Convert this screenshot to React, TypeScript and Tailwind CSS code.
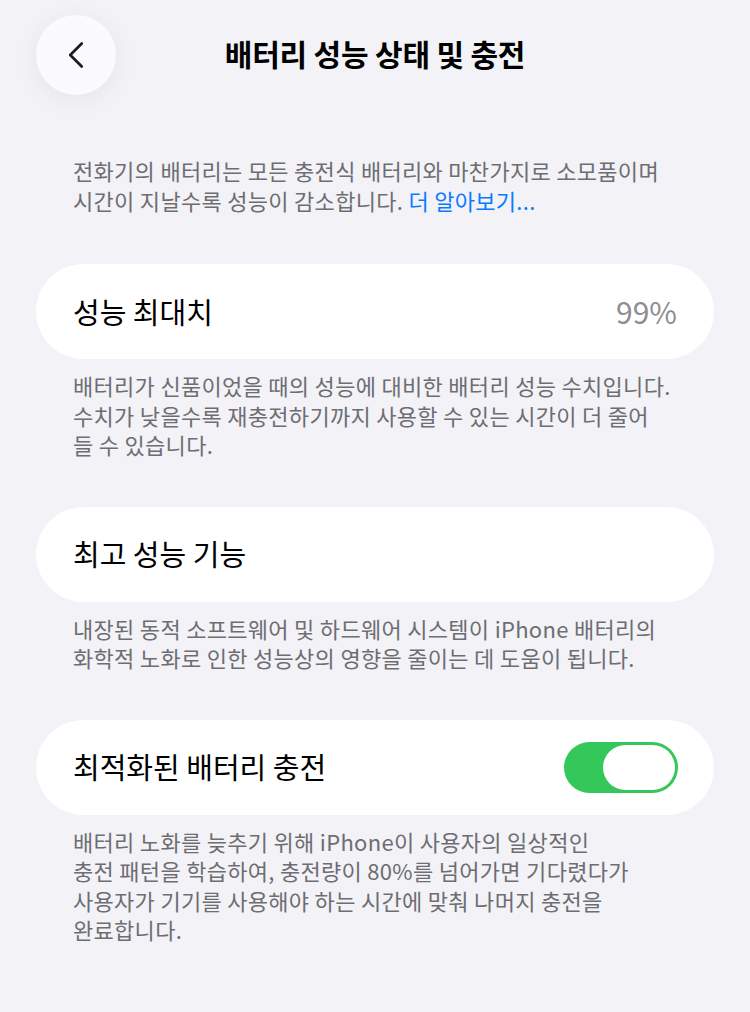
import { ChevronLeft } from 'lucide-react'

const font = { fontFamily: '"Noto Sans CJK KR", "Noto Sans", sans-serif' }

function Footer({ children }: { children: React.ReactNode }) {
  return (
    <p className="px-[73px] pt-[12px] text-[22px] leading-[29.5px] tracking-[0.3px] text-[#6d6d72]">
      {children}
    </p>
  )
}

function Toggle({ on }: { on: boolean }) {
  return (
    <div
      className={`flex h-[51px] w-[114px] items-center rounded-full p-[3px] ${
        on ? 'justify-end bg-[#34c759]' : 'justify-start bg-[#e9e9ea]'
      }`}
    >
      <div className="h-[45px] w-[72px] rounded-full bg-white" />
    </div>
  )
}

export default function App() {
  return (
    <div className="min-h-[1012px] w-[750px] bg-[#f2f2f7] text-black" style={font}>
      {/* Header */}
      <div className="relative flex h-[110px] items-center justify-center">
        <button className="absolute left-[36px] top-[15px] flex h-[80px] w-[80px] items-center justify-center rounded-full bg-[#fbfbfd] shadow-[0_4px_24px_rgba(0,0,0,0.06)]">
          <ChevronLeft className="h-[46px] w-[46px] text-[#1c1c1e]" strokeWidth={1.4} />
        </button>
        <h1 className="-mt-[4px] text-[30px] font-bold tracking-[-0.2px]">배터리 성능 상태 및 충전</h1>
      </div>

      <p className="px-[73px] pt-[45px] text-[22px] leading-[30px] tracking-[0.3px] text-[#6d6d72]">
        전화기의 배터리는 모든 충전식 배터리와 마찬가지로 소모품이며
        <br />
        시간이 지날수록 성능이 감소합니다. <span className="text-[#0a7aff]">더 알아보기...</span>
      </p>

      {/* 성능 최대치 */}
      <div className="mx-[36px] mt-[49px] flex h-[95px] items-center justify-between rounded-full bg-white px-[37px]">
        <span className="text-[29px]">성능 최대치</span>
        <span className="text-[30px] text-[#8e8e93]">99%</span>
      </div>
      <Footer>
        배터리가 신품이었을 때의 성능에 대비한 배터리 성능 수치입니다.
        <br />
        수치가 낮을수록 재충전하기까지 사용할 수 있는 시간이 더 줄어
        <br />
        들 수 있습니다.
      </Footer>

      {/* 최고 성능 기능 */}
      <div className="mx-[36px] mt-[47px] flex h-[95px] items-center rounded-full bg-white px-[37px]">
        <span className="text-[29px]">최고 성능 기능</span>
      </div>
      <Footer>
        내장된 동적 소프트웨어 및 하드웨어 시스템이 iPhone 배터리의
        <br />
        화학적 노화로 인한 성능상의 영향을 줄이는 데 도움이 됩니다.
      </Footer>

      {/* 최적화된 배터리 충전 */}
      <div className="mx-[36px] mt-[47px] flex h-[95px] items-center justify-between rounded-full bg-white pl-[37px] pr-[36px]">
        <span className="text-[29px]">최적화된 배터리 충전</span>
        <Toggle on />
      </div>
      <Footer>
        배터리 노화를 늦추기 위해 iPhone이 사용자의 일상적인
        <br />
        충전 패턴을 학습하여, 충전량이 80%를 넘어가면 기다렸다가
        <br />
        사용자가 기기를 사용해야 하는 시간에 맞춰 나머지 충전을
        <br />
        완료합니다.
      </Footer>
    </div>
  )
}
